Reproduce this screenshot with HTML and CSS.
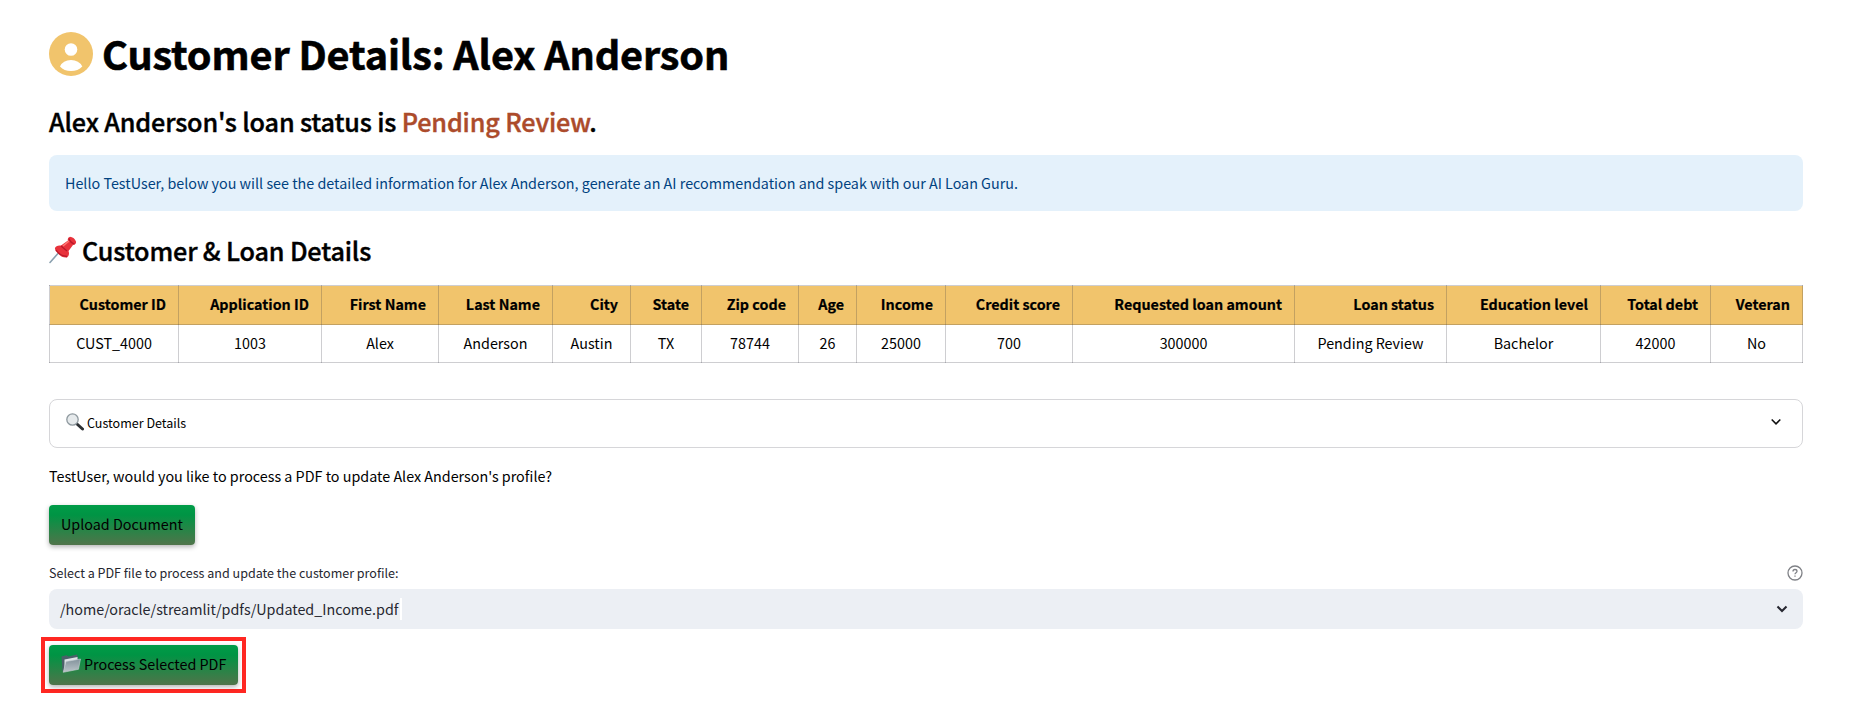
FILE: index.html
```
<!DOCTYPE html>
<html lang="en">
<head>
<meta charset="utf-8">
<title>Customer Details</title>
<link rel="stylesheet" href="styles.css">
</head>
<body>
<main class="page">
  <h1 class="title">
    <svg class="title-icon" viewBox="0 0 44 44"><circle cx="22" cy="22" r="22" fill="#f1c46c"/><circle cx="22" cy="17.5" r="6.3" fill="#fff"/><path d="M11 34.5Q14 28 22 28T33.3 34.5Q29 39 22 39T11 34.5Z" fill="#fff"/></svg>
    <span class="title-text">Customer Details: Alex Anderson</span>
  </h1>
  <h2 class="status"><span>Alex Anderson's loan status is <span class="pending">Pending Review</span>.</span></h2>
  <div class="alert"><span>Hello TestUser, below you will see the detailed information for Alex Anderson, generate an AI recommendation and speak with our AI Loan Guru.</span></div>
  <h2 class="section">
    <svg class="pin" viewBox="0 0 28 28"><path d="M1 26.5 12 14" stroke="#8ba1b0" stroke-width="1.6" stroke-linecap="round"/><path d="M6 12Q7 9 12 9.500L19 4.500Q18 1.500 21 .7 25 1 27 5.500 27.500 8.500 24 9L19.500 15Q21 19 18 21.500 13 22 9.500 18 5.500 15 6 12Z" fill="#e8323c"/><path d="M7 14Q11 20 18 20.500M20 2.500Q21 6.500 25.500 8M12 10 18 15" stroke="#ba1829" stroke-width="1.300" fill="none"/><path d="m14 10 6-5" stroke="#ff7773" stroke-width="1.600"/></svg>
    <span>Customer &amp; Loan Details</span>
  </h2>
  <table class="loans">
    <colgroup><col class="c1"><col class="c2"><col class="c3"><col class="c4"><col class="c5"><col class="c6"><col class="c7"><col class="c8"><col class="c9"><col class="c10"><col class="c11"><col class="c12"><col class="c13"><col class="c14"><col class="c15"></colgroup>
    <thead><tr><th>Customer ID</th><th>Application ID</th><th>First Name</th><th>Last Name</th><th>City</th><th>State</th><th>Zip code</th><th>Age</th><th>Income</th><th>Credit score</th><th>Requested loan amount</th><th>Loan status</th><th>Education level</th><th>Total debt</th><th>Veteran</th></tr></thead>
    <tbody><tr><td>CUST_4000</td><td>1003</td><td>Alex</td><td>Anderson</td><td>Austin</td><td>TX</td><td>78744</td><td>26</td><td>25000</td><td>700</td><td>300000</td><td>Pending Review</td><td>Bachelor</td><td>42000</td><td>No</td></tr></tbody>
  </table>
  <div class="expander">
    <svg class="lens" viewBox="0 0 18 18"><path d="m11 11 5.500 5" stroke="#2b2f33" stroke-width="3" stroke-linecap="round"/><circle cx="6.500" cy="6.500" r="5.700" fill="#e6eaec" stroke="#8f999f" stroke-width="1.300"/></svg>
    <span class="expander-label">Customer Details</span>
    <svg class="chevron" viewBox="0 0 12 8"><path d="m1.700 1.500 4.300 4.300 4.300-4.300" fill="none" stroke="#111" stroke-width="1.600"/></svg>
  </div>
  <p class="prompt"><span>TestUser, would you like to process a PDF to update Alex Anderson's profile?</span></p>
  <button class="btn upload"><span>Upload Document</span></button>
  <div class="label-row">
    <span>Select a PDF file to process and update the customer profile:</span>
    <svg class="help" viewBox="0 0 16 16"><circle cx="8" cy="8" r="7" fill="none" stroke="#7f8186" stroke-width="1.300"/><path d="M6 6.500Q6 4.500 8 4.500T10 6.300C10 7.700 8 7.700 8 9.300M8 10.500v1.300" fill="none" stroke="#7f8186" stroke-width="1.300"/></svg>
  </div>
  <div class="select"><span class="path">/home/oracle/streamlit/pdfs/Updated_Income.pdf</span><i class="caret"></i>
    <svg class="chevron" viewBox="0 0 12 8"><path d="m1.500 1.500 4.500 4.500 4.500-4.500" fill="none" stroke="#262730" stroke-width="2.100"/></svg>
  </div>
  <div class="highlight">
    <button class="btn process"><svg class="folder" viewBox="0 0 20 19"><defs><linearGradient id="front" x2="0" y2="1"><stop stop-color="#82929b"/><stop offset="1" stop-color="#bcc5ca"/></linearGradient></defs><path d="M.5 2.500 5.500 1.200 7.500 2.500 16 .5 17.500 5 4 18 1.500 17Z" fill="#4b6069"/><path d="M3.500 5.500 16.500 3 16.500 6 3.500 15Z" fill="#dfe4e7"/><path d="M5 7.500 19.500 5 17.500 15.300 2.200 18.300Z" fill="url(#front)" stroke="#c8d0d5" stroke-width=".6"/></svg><span>Process Selected PDF</span></button>
  </div>
</main>
</body>
</html>
```
FILE: styles.css
```
* { box-sizing: border-box; }
body { margin: 0; background: #fff; color: #000; font-family: "Noto Sans CJK SC", sans-serif; font-size: 14.33px; }
.page { display: flex; flex-direction: column; align-items: stretch; padding: 25px 46px 0 49px; }
h1, h2, p { margin: 0; white-space: nowrap; }
svg { flex: none; }
.title { display: flex; align-items: center; gap: 9px; height: 56px; font-size: 39.6px; line-height: 56px; font-weight: 700; letter-spacing: -.11px; }
.title-text { -webkit-text-stroke: .6px #000; }
.title-icon { width: 44px; height: 44px; margin-top: 1px; }
.status { margin-top: 22px; height: 36px; line-height: 36px; font-size: 25.2px; font-weight: 500; letter-spacing: -.155px; -webkit-text-stroke: .4px; }
.pending { color: #ac4b2b; }
.alert { margin-top: 16px; height: 56px; line-height: 56px; padding-left: 16px; border-radius: 8px; background: #e4f1fb; color: #004280; }
.section { display: flex; align-items: center; gap: 5px; margin-top: 21px; height: 36px; line-height: 36px; font-size: 25.2px; font-weight: 500; letter-spacing: -.15px; -webkit-text-stroke: .4px; }
.pin { width: 28px; height: 28px; margin-top: -1px; }
.loans { table-layout: fixed; width: 1754px; margin-top: 17px; border-collapse: collapse; line-height: 20px; }
.loans th, .loans td { border: 1px solid rgba(49, 51, 63, .24); padding: 0 12px 2px; white-space: nowrap; }
.loans th { height: 39px; text-align: right; background: #f1c46c; font-weight: 700; -webkit-text-stroke: .2px; }
.loans td { height: 38px; text-align: center; }
.c1 { width: 129px; } .c2 { width: 143px; } .c3 { width: 117px; } .c4 { width: 114px; } .c5 { width: 78px; }
.c6 { width: 71px; } .c7 { width: 97px; } .c8 { width: 58px; } .c9 { width: 89px; } .c10 { width: 127px; }
.c11 { width: 222px; } .c12 { width: 152px; } .c13 { width: 154px; } .c14 { width: 110px; } .c15 { width: 92px; }
.expander { display: flex; align-items: center; margin-top: 36px; height: 49px; padding: 0 20px 0 16px; border: 1px solid #d6d6d9; border-radius: 8px; font-size: 12.54px; gap: 3px; }
.expander-label { padding-bottom: 2px; }
.lens { width: 18px; height: 18px; margin-top: -3px; }
.chevron { width: 12px; height: 8px; margin-left: auto; }
.expander .chevron { margin-top: -3px; }
.prompt { margin-top: 16px; height: 25px; line-height: 24px; }
.btn { display: flex; align-items: center; height: 40px; padding: 0 12px 3px; border: 0; border-radius: 4px; background: linear-gradient(#009c48 0%, #009444 25%, #50744a 100%); box-shadow: 0 2px 5px rgba(0,0,0,.3); font: inherit; color: #000; white-space: nowrap; }
.upload { align-self: flex-start; width: 141.5px; width: 146px; margin-top: 16px; }
.label-row { display: flex; align-items: center; justify-content: space-between; margin-top: 17px; height: 21px; padding-bottom: 1px; font-size: 12.54px; color: #262730; }
.help { width: 16px; height: 16px; margin-top: 1px; }
.select { display: flex; align-items: center; margin-top: 6px; height: 40px; padding: 0 15px 0 11px; border-radius: 8px; background: #eceff4; color: #262730; }
.path { padding-bottom: 1px; }
.caret { width: 2px; height: 22px; margin-left: 2px; background: #fff; }
.highlight { width: 205px; height: 56px; margin: 8px 0 0 -8px; padding: 4px; border: 4px solid #ff2722; }
.process { width: 189px; gap: 3px; }
.folder { width: 20px; height: 19px; }
```
